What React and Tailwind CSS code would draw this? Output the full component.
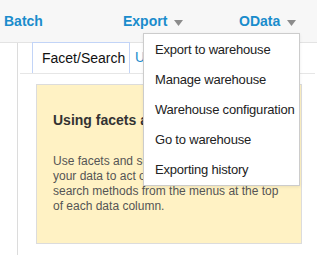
import React from "react";

const menuItems = [
  "Export to warehouse",
  "Manage warehouse",
  "Warehouse configuration",
  "Go to warehouse",
  "Exporting history",
];

function Caret() {
  return (
    <svg width="9" height="6" viewBox="0 0 9 6" className="ml-[7px] mt-[2px]">
      <path d="M0 0 H9 L4.5 6 Z" fill="#8c8c8c" />
    </svg>
  );
}

export default function App() {
  return (
    <div className="relative w-[317px] h-[255px] overflow-hidden bg-white font-['Liberation_Sans',Arial,sans-serif]">
      {/* top menu bar */}
      <div className="h-[43px] bg-[#f7f7f7] border-b border-[#e3e3e3] flex items-center text-[14px] font-bold text-[#1a8ccc] pt-[1px]">
        <div className="w-[123px] pl-[4px]">Batch</div>
        <div className="w-[116px] flex items-center">Export<Caret /></div>
        <div className="flex items-center">OData<Caret /></div>
      </div>

      <div className="flex h-[212px]">
        {/* left sidebar */}
        <div className="w-[18px] border-r border-[#dcdcdc] shrink-0" />

        <div className="flex-1">
          {/* tabs */}
          <div className="h-[31px] flex items-end pl-[12px] border-b border-[#e6e6e6] mx-[2px]">
            <div className="h-[31px] w-[98px] border border-b-0 border-[#c2d4f7] bg-white flex items-center pl-[9px] text-[14px] text-[#111]">
              Facet/Search
            </div>
            <div className="h-[31px] flex items-center pl-[5px] text-[14px] text-[#1a8ccc]">Undo / Redo</div>
          </div>

          {/* help box */}
          <div className="ml-[18px] mt-[10px] w-[266px] h-[160px] bg-[#fff2c4] border border-[#dcdcdc] pl-[16px] pt-[25px]">
            <div className="text-[14px] font-bold text-[#333]">Using facets and filters</div>
            <div className="mt-[23px] w-[236px] text-[12px] leading-[15px] text-[#555]">
              Use facets and search to select subsets of your data to act on. Choose facet and search methods from the menus at the top of each data column.
            </div>
          </div>
        </div>
      </div>

      {/* export dropdown */}
      <div className="absolute left-[143px] top-[33px] w-[157px] h-[153px] bg-white border border-[#cccccc] shadow-[0_1px_3px_rgba(0,0,0,0.08)] pt-[1px]">
        {menuItems.map((item) => (
          <div key={item} className="h-[30px] flex items-center pl-[11px] text-[13px] tracking-[-0.2px] text-[#222] whitespace-nowrap">
            {item}
          </div>
        ))}
      </div>
    </div>
  );
}
